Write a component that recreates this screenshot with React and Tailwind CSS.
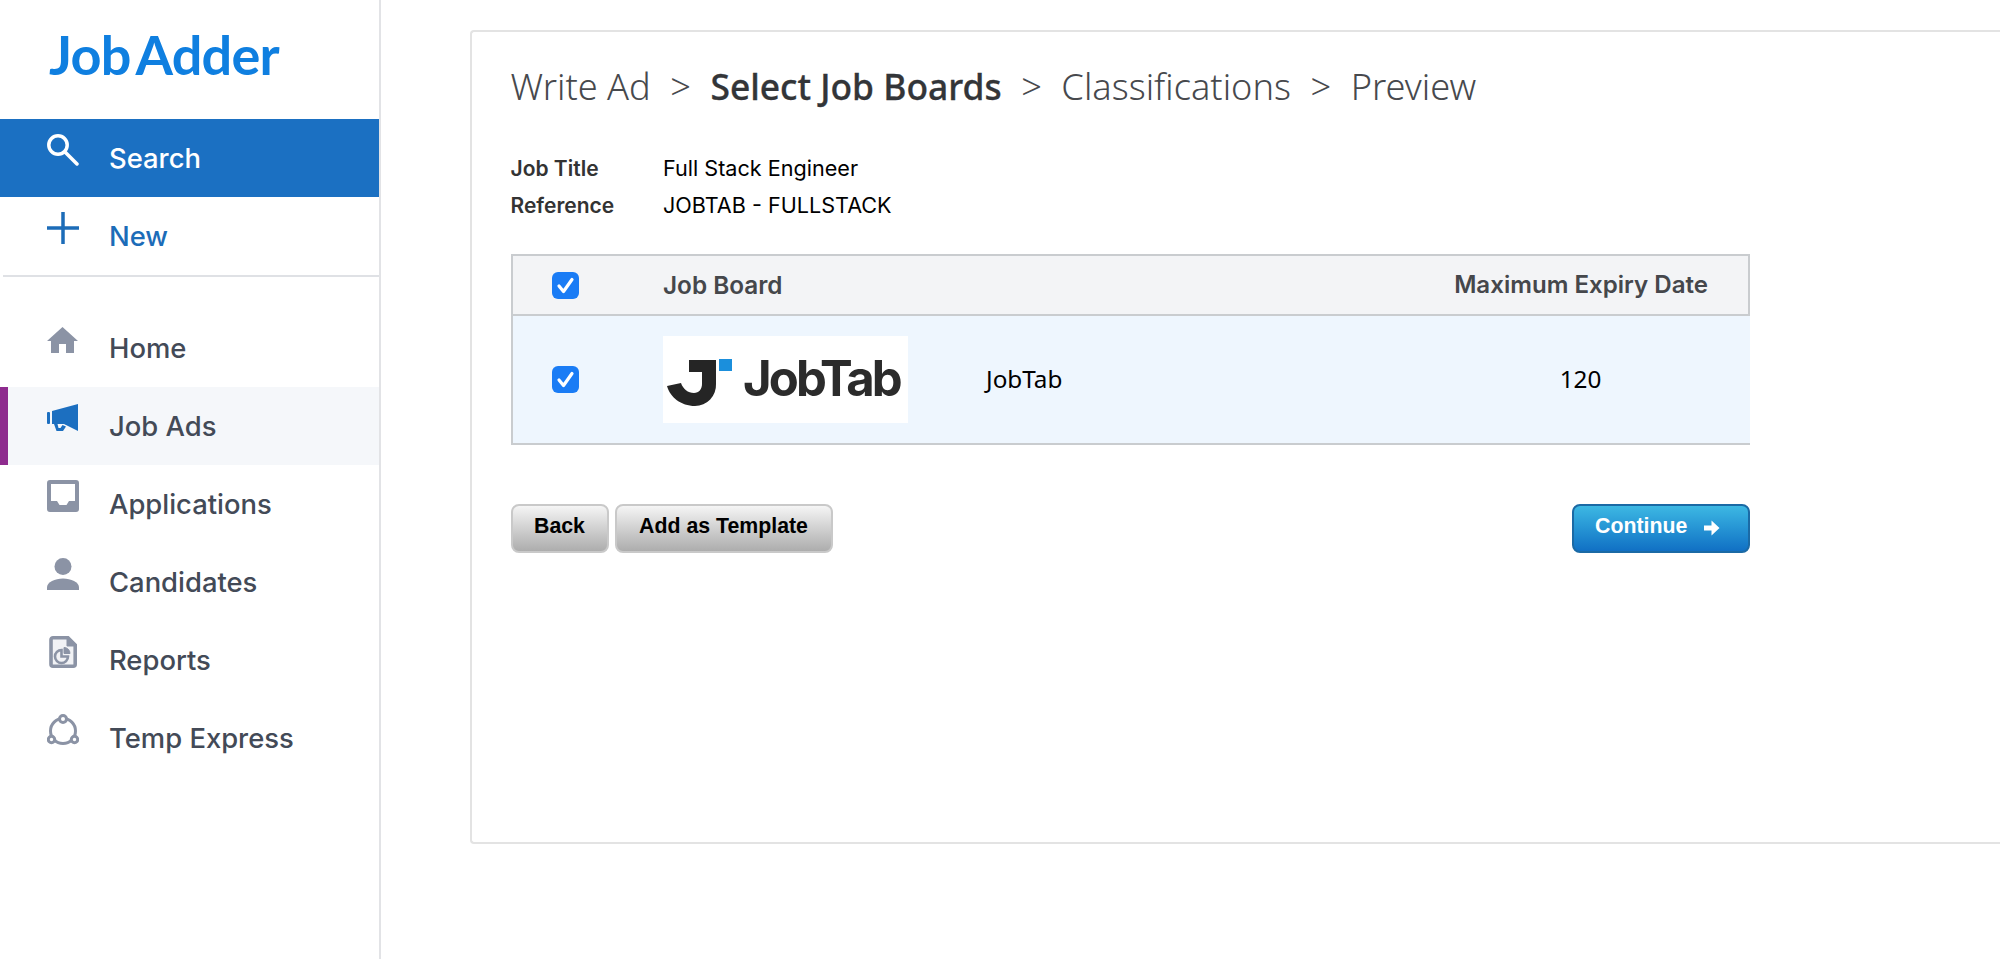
import React from 'react';

const grey = '#8b93a5';

function SearchIcon() {
  return (
    <svg width="32" height="32" viewBox="0 0 32 32" fill="none" stroke="#fff" strokeWidth="3.500">
      <circle cx="11" cy="11" r="9.200" />
      <path d="M18 18 L30 30" strokeLinecap="round" />
    </svg>
  );
}

function PlusIcon() {
  return (
    <svg width="32" height="32" viewBox="0 0 32 32" fill="none" stroke="#1c6cb8" strokeWidth="3.500">
      <path d="M16 0 V32 M0 16 H32" />
    </svg>
  );
}

function HomeIcon() {
  return (
    <svg width="32" height="32" viewBox="0 -3 32 32" fill={grey}>
      <path d="M15.5 0 L31 14 H27 V26 H19 V17 H12 V26 H4 V14 H0 Z" />
    </svg>
  );
}

function MegaphoneIcon() {
  return (
    <svg width="32" height="32" viewBox="0 -2 32 32" fill="#1c6fc0">
      <rect x="0" y="8" width="3" height="12" rx="1" />
      <path d="M5 7 L31 0 V27 L17 20 H5 Z" />
      <path d="M7 20 L9.5 27 H16 L19 22.5 L15.5 21 L13.5 24 H11.5 L10.5 20 Z" />
    </svg>
  );
}

function InboxIcon() {
  return (
    <svg width="32" height="32" viewBox="0 0 32 32" fill={grey}>
      <path
        fillRule="evenodd"
        d="M3 0 H29 A3 3 0 0 1 32 3 V29 A3 3 0 0 1 29 32 H3 A3 3 0 0 1 0 29 V3 A3 3 0 0 1 3 0 Z M4 4 H28 V21 H22 L19.500 25 H12.500 L10 21 H4 Z"
      />
    </svg>
  );
}

function PersonIcon() {
  return (
    <svg width="32" height="32" viewBox="0 0 32 32" fill={grey}>
      <circle cx="16" cy="8.500" r="8.500" />
      <path d="M0 32 V29.500 C0 24 8 20.500 16 20.500 S32 24 32 29.500 V32 Z" />
    </svg>
  );
}

function ReportIcon() {
  return (
    <svg width="32" height="32" viewBox="0 0 32 32" fill="none" stroke={grey}>
      <path d="M4 3.800 A2 2 0 0 1 6 1.800 H21 L28.200 9 V28.200 A2 2 0 0 1 26.200 30.200 H6 A2 2 0 0 1 4 28.200 Z" fill="#f1f2f5" strokeWidth="3.600" />
      <path d="M20 2 V10 H28 Z" fill={grey} strokeWidth="1" />
      <path d="M14.500 14 A6.500 6.500 0 1 0 21 20.500 H14.500 Z" strokeWidth="2.600" />
      <path d="M17 11.500 A6 6 0 0 1 23 17.500 H17 Z" fill={grey} strokeWidth="1" />
    </svg>
  );
}

function TempIcon() {
  return (
    <svg width="32" height="32" viewBox="0 0 32 32" fill="#fff" stroke={grey} strokeWidth="3">
      <circle cx="16" cy="17" r="12.500" fill="none" />
      <circle cx="16" cy="5" r="3.500" />
      <circle cx="4.500" cy="25.500" r="3.200" />
      <circle cx="27.500" cy="25.500" r="3.200" />
    </svg>
  );
}

function NavRow({ icon, label, className }) {
  return (
    <div className={`flex h-[78px] items-center pl-[47px] ${className}`}>
      <span className="mb-4 flex h-8 w-8 items-center justify-center">{icon}</span>
      <span className="ml-[30px] pt-[2px] text-[27.4px] font-medium">{label}</span>
    </div>
  );
}

function Checkbox() {
  return (
    <div className="flex h-[27px] w-[27px] items-center justify-center rounded-[6px] bg-[#1a7cf5]">
      <svg width="21" height="21" viewBox="0 0 21 21" fill="none" stroke="#fff" strokeWidth="3.200" strokeLinecap="round" strokeLinejoin="round">
        <path d="M4 11 L8.500 16.500 L17 4.500" />
      </svg>
    </div>
  );
}

function JobTabLogo() {
  return (
    <div className="flex h-[87px] w-[245px] items-start bg-white pl-1 pt-[23px] blur-[0.6px]">
      <svg width="66" height="48" viewBox="0 0 66 48" className="shrink-0">
        <path d="M22 1 H49 V25 A21 21 0 0 1 28 47 C14 47 3 38 0 27 L14 24 C16 30 21 34 27 34 C32 34 35 30 35 25 V13 H22 Z" fill="#252525" />
        <rect x="52" y="0" width="13" height="12" fill="#1b8fdc" />
      </svg>
      <span className="ml-[10px] -mt-[10px] font-['Inter',sans-serif] text-[49px] font-bold leading-[60px] tracking-[-2.900px] text-[#2b2b2b]">
        JobTab
      </span>
    </div>
  );
}

export default function App() {
  return (
    <div className="flex h-[959px] w-[2000px] overflow-hidden bg-white font-['Inter',sans-serif]">
      <aside className="h-full w-[381px] shrink-0 border-r-2 border-[#e2e3e6]">
        <div className="flex h-[119px] items-start pl-[49px] pt-[23px]">
          <span className="font-['Lato',sans-serif] text-[54px] font-bold leading-[64px] tracking-[-0.8px] text-[#0f7fe0]">
            Job<span className="ml-[5px]">Adder</span>
          </span>
        </div>
        <NavRow icon={<SearchIcon />} label="Search" className="bg-[#1b70c2] text-white" />
        <NavRow icon={<PlusIcon />} label="New" className="text-[#1c6cb8]" />
        <div className="ml-[3px] h-[2px] bg-[#dfe1e5]" />
        <div className="mt-8 text-[#434a57]">
          <NavRow icon={<HomeIcon />} label="Home" />
          <div className="border-l-[8px] border-[#8e2b8e] bg-[#f5f7fa] [&>div]:pl-[39px]">
            <NavRow icon={<MegaphoneIcon />} label="Job Ads" />
          </div>
          <NavRow icon={<InboxIcon />} label="Applications" />
          <NavRow icon={<PersonIcon />} label="Candidates" />
          <NavRow icon={<ReportIcon />} label="Reports" />
          <NavRow icon={<TempIcon />} label="Temp Express" />
        </div>
      </aside>

      <main className="flex-1 pl-[89px] pt-[30px]">
        <section className="h-[814px] rounded-l-[4px] border-2 border-r-0 border-[#e3e3e3] pl-[38.500px] pt-[29px]">
          <div className="flex items-center gap-[19.500px] font-['Noto_Sans',sans-serif] text-[36.200px] leading-[50px] text-[#47494d]">
            <span className="font-light">Write Ad</span>
            <span className="font-light">&gt;</span>
            <span className="text-[35.400px] font-medium text-[#333538] [-webkit-text-stroke:0.3px_#333538]">Select Job Boards</span>
            <span className="font-light">&gt;</span>
            <span className="font-light">Classifications</span>
            <span className="font-light">&gt;</span>
            <span className="font-light">Preview</span>
          </div>

          <dl className="mt-[46px] grid grid-cols-[152.500px_1fr] gap-y-[13px] text-[21.600px] leading-6">
            <dt className="text-[21px] font-semibold text-[#333]">Job Title</dt>
            <dd className="-mt-px text-black">Full Stack Engineer</dd>
            <dt className="text-[21px] font-semibold text-[#333]">Reference</dt>
            <dd className="-mt-px text-black">JOBTAB - FULLSTACK</dd>
          </dl>

          <div className="mt-[36px] w-[1239.500px]">
            <div className="flex h-[62px] items-center border-2 border-[#c9cccf] bg-[#f3f4f6] pl-[39.500px] pr-[40px] text-[24.300px] font-semibold text-[#45474b]">
              <Checkbox />
              <span className="ml-[84px] flex-1">Job Board</span>
              <span className="text-[24.100px]">Maximum Expiry Date</span>
            </div>
            <div className="flex h-[129px] items-center border-b-2 border-l-2 border-[#c9cccf] bg-[#eef6fe] pl-[39.500px] pr-[43px] text-[24.300px] text-black">
              <Checkbox />
              <div className="ml-[84px]">
                <JobTabLogo />
              </div>
              <span className="ml-[78px] flex-1 font-['Noto_Sans',sans-serif]">JobTab</span>
              <span className="w-[253px] text-center font-['Noto_Sans',sans-serif]">120</span>
            </div>
          </div>

          <div className="mt-[59px] flex w-[1239.500px] font-['Liberation_Sans',sans-serif] text-[21.300px] font-bold">
            <button className="h-[49px] w-[98px] rounded-[8px] border-2 border-[#c9c9c9] bg-linear-to-b from-[#f5f5f5] to-[#adadad] pb-[3px] text-black">
              Back
            </button>
            <button className="ml-[6px] h-[49px] w-[218px] rounded-[8px] border-2 border-[#c9c9c9] bg-linear-to-b from-[#f5f5f5] to-[#adadad] pb-[3px] text-black">
              Add as Template
            </button>
            <button className="ml-auto flex h-[49px] w-[178px] items-center rounded-[8px] border-2 border-[#1b6aa5] bg-linear-to-b from-[#3db8e3] to-[#1170c4] pb-[3px] pl-[21px] text-white">
              Continue
              <svg width="16" height="16" viewBox="0 0 16 16" className="ml-[17px] mt-[2px]" fill="#fff">
                <path d="M0 5.500 H7.500 V0.500 L15.500 8 L7.500 15.500 V10.500 H0 Z" />
              </svg>
            </button>
          </div>
        </section>
      </main>
    </div>
  );
}
